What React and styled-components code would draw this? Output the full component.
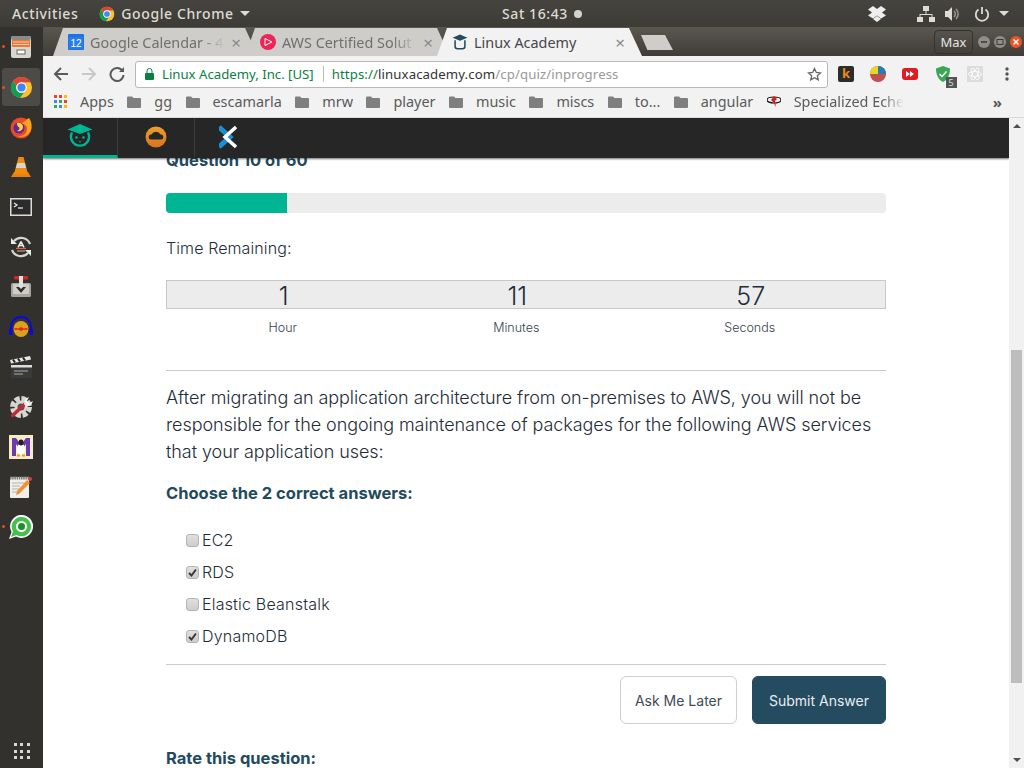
import React from "react";
import styled, { createGlobalStyle } from "styled-components";

const UI_FONT = `"Noto Sans", "DejaVu Sans", sans-serif`;
const PAGE_FONT = `Inter, "Open Sans", sans-serif`;

const Global = createGlobalStyle`
  html, body { margin: 0; padding: 0; height: 100%; overflow: hidden; background: #fff; }
  * { box-sizing: border-box; }
`;

const Chrome = ({ size = 24 }) => (
  <svg width={size} height={size} viewBox="0 0 24 24">
    <circle cx="12" cy="12" r="11" fill="#fbc02d" />
    <path d="M3.2 5.4A11 11 0 0 1 21.6 6.6H12a5.5 5.5 0 0 0-5.2 3.6z" fill="#db4437" />
    <path d="M3.2 5.4A11 11 0 0 0 10.4 22.9L15 16.6a5.5 5.5 0 0 1-8.2-6.4z" fill="#0f9d58" />
    <circle cx="12" cy="12" r="5.5" fill="#fff" />
    <circle cx="12" cy="12" r="4.3" fill="#4285f4" />
  </svg>
);

const FilesIcon = () => (
  <svg width="24" height="24" viewBox="0 0 24 24">
    <rect x="2" y="1" width="20" height="22" rx="2" fill="#d8d6d0" />
    <rect x="2" y="1" width="20" height="4" rx="2" fill="#8b8a86" />
    <rect x="3" y="5" width="18" height="7" fill="#e8793a" />
    <path d="M4 7h16M4 9.5h16" stroke="#f7c9a0" strokeWidth="1" />
    <rect x="8" y="15" width="8" height="4" fill="#fff" stroke="#66645f" />
  </svg>
);

const Firefox = () => (
  <svg width="24" height="24" viewBox="0 0 24 24">
    <circle cx="12" cy="13" r="10.5" fill="#e8482c" />
    <path d="M20 3c3 4 3.5 10 1 14-3 4.5-8 6-12 4 5 .5 9-2 9-7 0-3-2-5-5-5 0-2 3-2 4-4z" fill="#ffa31a" />
    <circle cx="10" cy="13" r="5.5" fill="#5a2a9a" />
    <path d="M8 8c3-1 6 1 6 4 0 3-3 5-6 4 2-1 3-2 2-4-1 0-2-1-2-4z" fill="#ffcf3a" />
  </svg>
);

const Vlc = () => (
  <svg width="24" height="24" viewBox="0 0 24 24">
    <path d="M2 22l3-5h14l3 5z" fill="#e8820c" />
    <path d="M9.5 2h5L19 19H5z" fill="#f08a10" />
    <path d="M8.2 8h7.6l1.3 5H6.9z" fill="#d9d5cc" />
  </svg>
);

const Terminal = () => (
  <svg width="24" height="24" viewBox="0 0 24 24">
    <rect x="1" y="3" width="22" height="18" fill="#dcdcdc" />
    <rect x="2.5" y="4.5" width="19" height="15" fill="#2b2b2b" />
    <path d="M5 8l3 2-3 2" fill="none" stroke="#eee" strokeWidth="1.2" />
    <path d="M9 13h5" stroke="#eee" strokeWidth="1.2" />
  </svg>
);

const Updater = () => (
  <svg width="24" height="24" viewBox="0 0 24 24">
    <path d="M5 6A9.5 9.5 0 0 1 21 9M19 18A9.5 9.5 0 0 1 3 15" fill="none" stroke="#d7d5d0" strokeWidth="2.2" />
    <path d="M2 3v6h6zM22 21v-6h-6z" fill="#ecebe7" />
    <path d="M12 6.5l-3 6M12 6.5l3 6M10 10.5h4" stroke="#eee" strokeWidth="1.6" fill="none" />
    <path d="M7 13.5h10" stroke="#e8622c" strokeWidth="1.2" />
    <path d="M8 16h8" stroke="#bbb" strokeWidth="1" />
  </svg>
);

const Joystick = () => (
  <svg width="24" height="24" viewBox="0 0 24 24">
    <rect x="2" y="8" width="20" height="14" rx="1.5" fill="#a6a49e" />
    <rect x="4" y="9" width="16" height="10" rx="1" fill="#cfcdc7" />
    <rect x="5" y="1" width="14" height="3.5" rx="1" fill="#cc2a20" />
    <rect x="10" y="1" width="4" height="13" fill="#e2e0da" />
    <path d="M7 12h3l2 2 2-2h3l-5 6z" fill="#2e2d2a" />
  </svg>
);

const Audacity = () => (
  <svg width="24" height="24" viewBox="0 0 24 24">
    <path d="M2 15v-3a10 10 0 0 1 20 0v3" fill="none" stroke="#0a0ae0" strokeWidth="1.8" />
    <rect x="0" y="13" width="3.5" height="7" rx="1.5" fill="#0a0ae0" />
    <rect x="20.5" y="13" width="3.5" height="7" rx="1.5" fill="#0a0ae0" />
    <ellipse cx="12" cy="14" rx="7.5" ry="8" fill="#d8a21e" />
    <path d="M4 14l3-1 2 .5 3-1.5 3 1.5 2-.5 3 1-3 1-2-.5-3 1.5-3-1.5-2 .5z" fill="#e8261c" />
  </svg>
);

const Clapper = () => (
  <svg width="24" height="24" viewBox="0 0 24 24">
    <rect x="2" y="10" width="21" height="13" rx="1" fill="#3a3a3a" />
    <path d="M1 5l20-4 1 3.5-20 4z" fill="#e6e6e6" />
    <path d="M4 4.5l2 3M9 3.5l2 3M14 2.5l2 3" stroke="#222" strokeWidth="2" />
    <path d="M2 10h21v2.5H2z" fill="#dcdcdc" />
    <path d="M5 16h14M5 19h9" stroke="#aaa" strokeWidth="1" />
  </svg>
);

const Settings = () => (
  <svg width="24" height="24" viewBox="0 0 24 24">
    <circle cx="12" cy="12" r="8.5" fill="none" stroke="#d8d6d1" strokeWidth="5" strokeDasharray="5 1.7" />
    <circle cx="12" cy="12" r="6.5" fill="#d8d6d1" />
    <circle cx="12" cy="12" r="3.5" fill="#55534f" />
    <path d="M3.5 20.5L16 9" stroke="#bf2b2e" strokeWidth="3.5" strokeLinecap="round" />
    <path d="M15 9l1-5 4-2-2 4 2 2 4-2-2 4-5 2z" fill="#f2f2f2" />
  </svg>
);

const Monodevelop = () => (
  <svg width="24" height="24" viewBox="0 0 24 24">
    <rect width="24" height="24" fill="#f6ecc8" />
    <path d="M3 21V3h4l5 7 5-7h4v18h-4V9l-5 7-5-7v12z" fill="#6a3aa8" />
    <ellipse cx="12" cy="14" rx="4" ry="5.5" fill="#fff" />
    <ellipse cx="12" cy="7.5" rx="2.5" ry="3" fill="#222" />
    <path d="M8 20.5h3M13 20.5h3" stroke="#e89a18" strokeWidth="2" />
  </svg>
);

const Notepad = () => (
  <svg width="24" height="24" viewBox="0 0 24 24">
    <rect x="1" y="2" width="19" height="21" rx="1" fill="#efefeb" />
    <path d="M1 3h19" stroke="#77756f" strokeWidth="3" strokeDasharray="1.5 .7" />
    <path d="M3 8h12M3 11h8M3 14h7M3 17h5" stroke="#b3b3ae" strokeWidth="1" />
    <path d="M7 20l1-4L18 5l3 3L10 19z" fill="#ef9235" />
    <circle cx="21" cy="4" r="2" fill="#d9403a" />
  </svg>
);

const Whatsapp = () => (
  <svg width="24" height="24" viewBox="0 0 24 24">
    <path d="M0 24l2.5-7a11.5 11.5 0 1 1 4.5 4.5z" fill="#fff" />
    <path d="M2 22l2-5.5a9.7 9.7 0 1 1 3.5 3.5z" fill="#45c04e" />
    <circle cx="12.5" cy="11.5" r="5.5" fill="#fff" />
    <circle cx="12.5" cy="11.5" r="3.5" fill="#1e8c2a" />
  </svg>
);

const Owl = () => (
  <svg width="26" height="26" viewBox="0 0 26 26">
    <path d="M13 0l12.5 5.5L13 10 .5 5.500z" fill="#00b594" />
    <path d="M5 8.500a9 9 0 1 0 16 0" fill="none" stroke="#00b594" strokeWidth="2.4" />
    <circle cx="9.500" cy="13.500" r="1.3" fill="#00b594" />
    <circle cx="16.500" cy="13.500" r="1.3" fill="#00b594" />
    <path d="M12 17h2l-1 2z" fill="#00b594" />
  </svg>
);

const CloudLogo = () => (
  <svg width="22" height="22" viewBox="0 0 22 22">
    <defs>
      <linearGradient id="cloudRing" x1="0" y1="0" x2="0" y2="1">
        <stop offset="0" stopColor="#e9a02c" />
        <stop offset="1" stopColor="#d8731f" />
      </linearGradient>
    </defs>
    <circle cx="11" cy="11" r="10.5" fill="url(#cloudRing)" />
    <path d="M6 13.5a2.500 2.500 0 0 1 .5-5 5 5 0 0 1 9 0 2.500 2.500 0 0 1 .5 5z" fill="#262626" />
  </svg>
);

const XLogo = () => (
  <svg width="18" height="24" viewBox="0 0 18 24" fill="none">
    <path d="M0 2l11 10L0 22" stroke="#1b8fd6" strokeWidth="5" />
    <path d="M17 2L6 12l11 10" stroke="#fff" strokeWidth="3.5" />
  </svg>
);

const Folder = () => (
  <svg width="14" height="12" viewBox="0 0 14 12">
    <path d="M0 1.5A1 1 0 0 1 1 .5h4L6.5 2H13a1 1 0 0 1 1 1V11a1 1 0 0 1-1 1H1a1 1 0 0 1-1-1z" fill="#7f7f7f" />
  </svg>
);

const AppsGrid = () => {
  const colors = ["#e94235", "#e94235", "#fbbc04", "#4285f4", "#34a853", "#ea4335", "#34a853", "#4285f4", "#fbbc04"];
  return (
    <svg width="13" height="13" viewBox="0 0 13 13">
      {colors.map((c, i) => (
        <rect key={i} x={(i % 3) * 5} y={Math.floor(i / 3) * 5} width="3" height="3" fill={c} />
      ))}
    </svg>
  );
};

const Page = styled.div`
  width: 1024px;
  height: 768px;
  overflow: hidden;
  display: flex;
  flex-direction: column;
  font-family: ${UI_FONT};
`;

const TopBar = styled.div`
  height: 27px;
  flex: none;
  display: grid;
  grid-template-columns: 490px auto 1fr;
  align-items: center;
  padding: 0 15px 0 12px;
  background: linear-gradient(#46443f, #3c3b36);
  color: #dfdbd2;
  font-size: 14px;
  font-weight: 500;
  letter-spacing: 0.6px;
`;

const TopLeft = styled.div`
  display: flex;
  align-items: center;
`;

const AppMenu = styled.div`
  display: flex;
  align-items: center;
  gap: 6px;
  margin-left: 21px;
`;

const Caret = styled.span`
  width: 0;
  height: 0;
  border-left: 5px solid transparent;
  border-right: 5px solid transparent;
  border-top: 5px solid #dfdbd2;
`;

const Clock = styled.div`
  display: flex;
  align-items: center;
  gap: 6px;
`;

const ClockDot = styled.span`
  width: 8px;
  height: 8px;
  border-radius: 50%;
  background: #d5d3cd;
`;

const Tray = styled.div`
  display: flex;
  align-items: center;
  justify-content: flex-end;
`;

const TrayIcon = styled.span`
  display: flex;
  margin-right: ${({ $mr }) => $mr}px;
`;

const Desktop = styled.div`
  flex: 1;
  min-height: 0;
  display: flex;
`;

const Dock = styled.div`
  width: 43px;
  flex: none;
  display: flex;
  flex-direction: column;
  background: #33312d;
  padding-bottom: 9px;
`;

const DockSlot = styled.div`
  position: relative;
  height: ${({ $active }) => ($active ? "38px" : "40px")};
  flex: none;
  display: flex;
  align-items: center;
  justify-content: center;
  background: ${({ $active }) => ($active ? "#4d4b47" : "transparent")};
  margin: ${({ $active }) => ($active ? "1px 3px 1px 2px" : "0 3px 0 2px")};
  border-radius: 3px;
`;

const RunDot = styled.span`
  position: absolute;
  left: 0;
  top: 18px;
  width: 3px;
  height: 3px;
  border-radius: 50%;
  background: #e2531d;
`;

const DockGrid = styled.div`
  margin: auto auto 0;
  display: grid;
  grid-template-columns: repeat(3, 3px);
  gap: 3.5px;
  & > span {
    width: 3px;
    height: 3px;
    background: #d8d8d8;
  }
`;

const Browser = styled.div`
  flex: 1;
  min-width: 0;
  display: flex;
  flex-direction: column;
`;

const TabStrip = styled.div`
  height: 29px;
  flex: none;
  display: flex;
  align-items: flex-end;
  padding-left: 10px;
  background: linear-gradient(#5a574f, #3f3d38);
`;

const Tab = styled.div`
  position: relative;
  z-index: ${({ $active, $order }) => ($active ? 5 : $order)};
  width: 205px;
  height: 28px;
  flex: none;
  margin-right: -13px;
  display: flex;
  align-items: center;
  gap: 6px;
  padding: 0 17px 0 15px;
  color: ${({ $active }) => ($active ? "#45474a" : "#6f6f6f")};
  background: ${({ $active }) => ($active ? "#f2f2f2" : "#cfcdca")};
  clip-path: polygon(0 100%, 10px 0, calc(100% - 13px) 0, 100% 100%);
  font-size: 14.4px;
`;

const TabTitle = styled.span`
  flex: 1;
  white-space: nowrap;
  overflow: hidden;
  mask-image: ${({ $active }) => ($active ? "none" : "linear-gradient(90deg, #000 82%, transparent)")};
`;

const TabClose = styled.span`
  font-size: 17px;
  color: #8a8a8a;
  line-height: 1;
`;

const NewTab = styled.div`
  width: 32px;
  height: 15px;
  margin: 0 0 6px 12px;
  background: #cfcdca;
  clip-path: polygon(0 0, 75% 0, 100% 100%, 20% 100%);
`;

const WindowControls = styled.div`
  margin-left: auto;
  align-self: center;
  display: flex;
  align-items: center;
  gap: 4px;
  padding-right: 2px;
`;

const MaxBadge = styled.div`
  width: 39px;
  height: 24px;
  margin-right: 1px;
  display: flex;
  align-items: center;
  justify-content: center;
  border: 1px solid #33322e;
  border-radius: 4px;
  color: #e6e6e6;
  font-size: 13px;
`;

const WinButton = styled.span`
  width: 12px;
  height: 12px;
  display: flex;
  border-radius: 50%;
  background: ${({ $close }) => ($close ? "#e9552b" : "#8f8d87")};
`;

const Toolbar = styled.div`
  height: 34px;
  flex: none;
  display: flex;
  align-items: center;
  background: #f2f2f2;
  padding: 2px 0 0 4px;
`;

const NavIcon = styled.div`
  width: 28px;
  display: flex;
  justify-content: center;
`;

const Omnibox = styled.div`
  width: 693px;
  height: 27px;
  margin-left: 4px;
  display: flex;
  align-items: center;
  padding: 0 5px 0 9px;
  background: #fff;
  border: 1px solid #b8b8b8;
  border-radius: 3px;
  font-size: 13.2px;
  white-space: nowrap;
`;

const SecureName = styled.span`
  color: #0b8043;
  margin-left: 8px;
`;

const UrlDivider = styled.span`
  width: 1px;
  height: 16px;
  background: #bbb;
  margin: 0 8px 0 9px;
`;

const UrlPart = styled.span`
  color: ${({ $color }) => $color};
  letter-spacing: 0.11px;
`;

const Star = styled.span`
  margin-left: auto;
  display: flex;
`;

const Extensions = styled.div`
  flex: 1;
  display: flex;
  align-items: center;
  justify-content: space-between;
  padding: 0 9px 0 10px;
`;

const Extension = styled.div`
  position: relative;
  width: 16px;
  height: 16px;
  display: flex;
  align-items: center;
  justify-content: center;
`;

const ExtKey = styled.div`
  width: 16px;
  height: 16px;
  border-radius: 2px;
  background: #2c2c2c;
  color: #f08a18;
  font-size: 13px;
  font-weight: 700;
  line-height: 15px;
  text-align: center;
`;

const ExtBadge = styled.span`
  position: absolute;
  right: -6px;
  bottom: -6px;
  width: 11px;
  height: 11px;
  background: #555;
  color: #ddd;
  font-size: 9px;
  line-height: 11px;
  text-align: center;
`;

const BookmarksBar = styled.div`
  height: 28px;
  flex: none;
  display: flex;
  align-items: center;
  gap: 13.5px;
  padding: 0 22px 4px 11px;
  background: #f2f2f2;
  border-bottom: 1px solid #d9d9d9;
  color: #5a5a5a;
  font-size: 14.4px;
  white-space: nowrap;
`;

const Bookmark = styled.div`
  display: flex;
  align-items: center;
  gap: 13px;
`;

const FadedLabel = styled.span`
  width: 110px;
  overflow: hidden;
  mask-image: linear-gradient(90deg, #000 80%, transparent);
`;

const More = styled.span`
  margin-left: auto;
  color: #555;
  font-size: 15px;
  font-weight: 700;
`;

const Viewport = styled.div`
  flex: 1;
  min-height: 0;
  display: flex;
`;

const PageColumn = styled.div`
  flex: 1;
  min-width: 0;
  display: flex;
  flex-direction: column;
  overflow: hidden;
  font-family: ${PAGE_FONT};
  background: #fff;
`;

const AppNav = styled.div`
  position: relative;
  z-index: 2;
  height: 40px;
  flex: none;
  display: flex;
  background: #262626;
  box-shadow: 0 1px 2px rgba(0, 0, 0, 0.55);
`;

const AppNavItem = styled.div`
  width: ${({ $width }) => $width}px;
  display: flex;
  align-items: center;
  justify-content: center;
  border-right: ${({ $last }) => ($last ? "none" : "1px solid #3d3d3d")};
  border-bottom: 3px solid ${({ $active }) => ($active ? "#00b594" : "transparent")};
`;

const Main = styled.div`
  width: 720px;
  margin: -9px 0 0 123px;
  flex: none;
`;

const Heading = styled.div`
  font-size: 16.5px;
  line-height: 22px;
  font-weight: 700;
  color: #224a5e;
`;

const ProgressTrack = styled.div`
  height: 20px;
  margin-top: 22px;
  border-radius: 4px;
  background: #ececec;
  overflow: hidden;
`;

const ProgressFill = styled.div`
  height: 100%;
  background: #00b594;
`;

const TimeLabel = styled.div`
  margin-top: 24px;
  font-size: 16px;
  line-height: 22px;
  font-weight: 300;
  letter-spacing: 0.1px;
  color: #1e2d38;
`;

const TimerGrid = styled.div`
  display: grid;
  grid-template-columns: repeat(3, 233.5px);
`;

const TimerBox = styled(TimerGrid)`
  height: 29px;
  margin-top: 21px;
  background: #ececec;
  border: 1px solid #c8c8c8;
  font-size: 25px;
  font-weight: 300;
  line-height: 31px;
  color: #1e2d38;
  text-align: center;
`;

const TimerLabels = styled(TimerGrid)`
  margin-top: 11px;
  font-size: 12.5px;
  line-height: 16px;
  font-weight: 300;
  color: #35434e;
  text-align: center;
`;

const Rule = styled.div`
  height: 1px;
  background: #c8ccd0;
  margin-top: ${({ $top }) => $top}px;
`;

const Question = styled.div`
  margin-top: 13px;
  font-size: 18px;
  line-height: 27px;
  font-weight: 300;
  letter-spacing: -0.07px;
  color: #1e2d38;
`;

const ChooseLabel = styled.div`
  margin-top: 17px;
  font-size: 16.5px;
  line-height: 22px;
  font-weight: 700;
  color: #224a5e;
`;

const Answers = styled.div`
  margin-top: 20px;
  padding-left: 20px;
  display: flex;
  flex-direction: column;
`;

const Answer = styled.div`
  height: 32px;
  display: flex;
  align-items: center;
  gap: 3px;
  font-size: 16px;
  font-weight: 300;
  letter-spacing: 0.2px;
  color: #1e2d38;
`;

const CheckBox = styled.span`
  width: 13px;
  height: 13px;
  display: flex;
  align-items: center;
  justify-content: center;
  border: 1px solid #b4b4b4;
  border-radius: 3px;
  background: linear-gradient(#e0e0e0, #cdcdcd);
`;

const Actions = styled.div`
  margin-top: 11px;
  display: flex;
  justify-content: flex-end;
  gap: 15px;
`;

const ActionButton = styled.div`
  height: 48px;
  width: ${({ $primary }) => ($primary ? "134px" : "117px")};
  display: flex;
  align-items: center;
  justify-content: center;
  border-radius: 6px;
  border: 1px solid ${({ $primary }) => ($primary ? "#244b5f" : "#cfcfcf")};
  background: ${({ $primary }) => ($primary ? "#244b5f" : "#fff")};
  color: ${({ $primary }) => ($primary ? "#e6eef2" : "#3e4c57")};
  font-size: 14px;
`;

const RateHeading = styled(Heading)`
  margin-top: 24px;
  line-height: 20px;
`;

const Scrollbar = styled.div`
  width: 15px;
  flex: none;
  display: flex;
  flex-direction: column;
  align-items: center;
  background: #f1f1f1;
`;

const ScrollArrow = styled.span`
  width: 0;
  height: 0;
  margin: ${({ $down }) => ($down ? "auto 0 6px" : "6px 0 0")};
  border-left: 4px solid transparent;
  border-right: 4px solid transparent;
  border-top: ${({ $down }) => ($down ? "4px solid #505050" : "none")};
  border-bottom: ${({ $down }) => ($down ? "none" : "4px solid #505050")};
`;

const ScrollThumb = styled.div`
  width: 11px;
  height: 333px;
  margin-top: 222px;
  background: #bdbdbd;
`;

const dockIcons = [
  { icon: <FilesIcon />, running: true },
  { icon: <Chrome size={23} />, running: true, active: true },
  { icon: <Firefox /> },
  { icon: <Vlc /> },
  { icon: <Terminal /> },
  { icon: <Updater /> },
  { icon: <Joystick /> },
  { icon: <Audacity /> },
  { icon: <Clapper /> },
  { icon: <Settings /> },
  { icon: <Monodevelop /> },
  { icon: <Notepad /> },
  { icon: <Whatsapp />, running: true }
];

const bookmarks = ["gg", "escamarla", "mrw", "player", "music", "miscs", "to..."];

const answers = [
  { label: "EC2", checked: false },
  { label: "RDS", checked: true },
  { label: "Elastic Beanstalk", checked: false },
  { label: "DynamoDB", checked: true }
];

export default function App() {
  return (
    <Page>
      <Global />
      <TopBar>
        <TopLeft>
          Activities
          <AppMenu>
            <Chrome size={16} />
            Google Chrome
            <Caret />
          </AppMenu>
        </TopLeft>
        <Clock>
          Sat 16:43
          <ClockDot />
        </Clock>
        <Tray>
          <TrayIcon $mr={31}>
            <svg width="18" height="16" viewBox="0 0 18 16">
              <path d="M5 0l4 3 4-3 5 3.5-4 3 4 3-5 3-4-3-4 3-5-3 4-3-4-3zM5 13l4-3 4 3-4 3z" fill="#eee" />
            </svg>
          </TrayIcon>
          <TrayIcon $mr={10}>
            <svg width="18" height="16" viewBox="0 0 18 16" fill="#dfdbd2">
              <rect x="6" y="0" width="6" height="5" />
              <rect x="0" y="11" width="6" height="5" />
              <rect x="12" y="11" width="6" height="5" />
              <path d="M8.5 5h1v3h6v3h-1V9h-11v2h-1V8h6z" />
            </svg>
          </TrayIcon>
          <TrayIcon $mr={14}>
            <svg width="15" height="14" viewBox="0 0 15 14" fill="#dfdbd2">
              <path d="M0 4h3l4-4v14l-4-4H0z" />
              <path d="M9 4a4 4 0 0 1 0 6M11 2a7 7 0 0 1 0 10" stroke="#9a9891" strokeWidth="1.5" fill="none" />
            </svg>
          </TrayIcon>
          <TrayIcon $mr={9}>
            <svg width="16" height="16" viewBox="0 0 16 16" fill="none" stroke="#dfdbd2" strokeWidth="1.8">
              <path d="M8 1v7" />
              <path d="M4.5 3.5a6.2 6.2 0 1 0 7 0" />
            </svg>
          </TrayIcon>
          <Caret />
        </Tray>
      </TopBar>
      <Desktop>
        <Dock>
          {dockIcons.map((item, i) => (
            <DockSlot key={i} $active={item.active}>
              {item.running && <RunDot />}
              {item.icon}
            </DockSlot>
          ))}
          <DockGrid>
            {Array.from({ length: 9 }, (_, i) => (
              <span key={i} />
            ))}
          </DockGrid>
        </Dock>
        <Browser>
          <TabStrip>
            <Tab $order={3}>
              <svg width="16" height="16" viewBox="0 0 16 16">
                <rect width="16" height="16" rx="1" fill="#1a73e8" />
                <rect x="1" y="3" width="14" height="12" fill="#2a7de8" />
                <text x="8" y="13" fontSize="10" fill="#fff" textAnchor="middle" fontFamily="Liberation Sans">12</text>
              </svg>
              <TabTitle>Google Calendar - 4</TabTitle>
              <TabClose>×</TabClose>
            </Tab>
            <Tab $order={2}>
              <svg width="16" height="16" viewBox="0 0 16 16">
                <circle cx="8" cy="8" r="8" fill="#ee2457" />
                <path d="M5 4.5l7 3.5-7 3.5z" fill="none" stroke="#fff" />
              </svg>
              <TabTitle>AWS Certified Solut</TabTitle>
              <TabClose>×</TabClose>
            </Tab>
            <Tab $active>
              <svg width="16" height="16" viewBox="0 0 26 26">
                <path d="M13 1l12 5-12 5L1 6z" fill="#234a5e" />
                <path d="M5 10v10a4 4 0 0 0 4 4h8a4 4 0 0 0 4-4V10" fill="none" stroke="#234a5e" strokeWidth="2.5" />
              </svg>
              <TabTitle $active>Linux Academy</TabTitle>
              <TabClose>×</TabClose>
            </Tab>
            <NewTab />
            <WindowControls>
              <MaxBadge>Max</MaxBadge>
              <WinButton>
                <svg width="12" height="12" viewBox="0 0 12 12">
                  <path d="M3 6h6" stroke="#3c3a36" strokeWidth="1.5" />
                </svg>
              </WinButton>
              <WinButton>
                <svg width="12" height="12" viewBox="0 0 12 12">
                  <rect x="3" y="3.5" width="6" height="5" fill="none" stroke="#3c3a36" />
                </svg>
              </WinButton>
              <WinButton $close>
                <svg width="12" height="12" viewBox="0 0 12 12">
                  <path d="M3.5 3.5l5 5M8.5 3.5l-5 5" stroke="#fff" strokeWidth="1.3" />
                </svg>
              </WinButton>
            </WindowControls>
          </TabStrip>
          <Toolbar>
            <NavIcon>
              <svg width="16" height="16" viewBox="0 0 16 16" fill="none" stroke="#5a5a5a" strokeWidth="2">
                <path d="M15 8H2M8 2L2 8l6 6" />
              </svg>
            </NavIcon>
            <NavIcon>
              <svg width="16" height="16" viewBox="0 0 16 16" fill="none" stroke="#c8c8c8" strokeWidth="2">
                <path d="M1 8h13M8 2l6 6-6 6" />
              </svg>
            </NavIcon>
            <NavIcon>
              <svg width="16" height="16" viewBox="0 0 16 16" fill="none" stroke="#5a5a5a" strokeWidth="2">
                <path d="M13.5 5A6.5 6.5 0 1 0 14.5 9" />
                <path d="M15 1v5h-5" fill="#5a5a5a" stroke="none" />
              </svg>
            </NavIcon>
            <Omnibox>
              <svg width="9" height="12" viewBox="0 0 9 12" fill="#0b8043">
                <path d="M1 5h7a1 1 0 0 1 1 1v5a1 1 0 0 1-1 1H1a1 1 0 0 1-1-1V6a1 1 0 0 1 1-1z" />
                <path d="M2 5V3a2.5 2.5 0 0 1 5 0v2" fill="none" stroke="#0b8043" />
              </svg>
              <SecureName>Linux Academy, Inc. [US]</SecureName>
              <UrlDivider />
              <UrlPart $color="#0b8043">https://</UrlPart>
              <UrlPart $color="#333">linuxacademy.com</UrlPart>
              <UrlPart $color="#999">/cp/quiz/inprogress</UrlPart>
              <Star>
                <svg width="15" height="15" viewBox="0 0 15 15" fill="none" stroke="#666" strokeWidth="1.3">
                  <path d="M7.5 1.5l1.8 4 4.2.4-3.2 2.8 1 4.2-3.8-2.2-3.8 2.2 1-4.2L1.5 5.9l4.2-.4z" />
                </svg>
              </Star>
            </Omnibox>
            <Extensions>
              <Extension>
                <ExtKey>k</ExtKey>
              </Extension>
              <Extension>
                <svg width="16" height="16" viewBox="0 0 16 16">
                  <circle cx="8" cy="8" r="8" fill="#c0504d" />
                  <path d="M8 8V0a8 8 0 0 1 8 8z" fill="#2a7ab8" />
                  <path d="M8 8V0a8 8 0 0 0-8 8z" fill="#e8d820" />
                </svg>
              </Extension>
              <Extension>
                <svg width="16" height="12" viewBox="0 0 16 12">
                  <rect width="16" height="12" rx="3" fill="#e01b24" />
                  <path d="M4 3l4 3-4 3zM8 3l4 3-4 3z" fill="#fff" />
                </svg>
              </Extension>
              <Extension>
                <svg width="16" height="16" viewBox="0 0 16 16">
                  <path d="M8 0l7 2.5c0 6-2 11-7 13.5C3 13.5 1 8.5 1 2.5z" fill="#3aa757" />
                  <path d="M4.5 8l2.5 2.5 4.5-5" fill="none" stroke="#fff" strokeWidth="1.5" />
                </svg>
                <ExtBadge>5</ExtBadge>
              </Extension>
              <Extension>
                <svg width="16" height="16" viewBox="0 0 16 16" fill="none" stroke="#fff" strokeWidth="0.8">
                  <rect width="16" height="16" fill="#dcdcdc" stroke="none" />
                  <ellipse cx="8" cy="8" rx="6.5" ry="2.5" />
                  <ellipse cx="8" cy="8" rx="6.5" ry="2.5" transform="rotate(60 8 8)" />
                  <ellipse cx="8" cy="8" rx="6.5" ry="2.5" transform="rotate(120 8 8)" />
                </svg>
              </Extension>
              <Extension>
                <svg width="4" height="14" viewBox="0 0 4 14" fill="#555">
                  <circle cx="2" cy="2" r="1.7" />
                  <circle cx="2" cy="7" r="1.7" />
                  <circle cx="2" cy="12" r="1.7" />
                </svg>
              </Extension>
            </Extensions>
          </Toolbar>
          <BookmarksBar>
            <Bookmark>
              <AppsGrid />
              Apps
            </Bookmark>
            {bookmarks.map(name => (
              <Bookmark key={name}>
                <Folder />
                {name}
              </Bookmark>
            ))}
            <Bookmark>
              <Folder />
              angular
            </Bookmark>
            <Bookmark>
              <svg width="14" height="14" viewBox="0 0 14 14">
                <ellipse cx="7" cy="5" rx="7" ry="3" fill="none" stroke="#111" strokeWidth="1.2" />
                <path d="M7 1l3 3-2 2 1 6-3-5-2-2z" fill="#d81e1e" />
              </svg>
              <FadedLabel>Specialized Eche</FadedLabel>
            </Bookmark>
            <More>»</More>
          </BookmarksBar>
          <Viewport>
            <PageColumn>
              <AppNav>
                <AppNavItem $width={75} $active>
                  <Owl />
                </AppNavItem>
                <AppNavItem $width={77}>
                  <CloudLogo />
                </AppNavItem>
                <AppNavItem $width={65} $last>
                  <XLogo />
                </AppNavItem>
              </AppNav>
              <Main>
                <Heading>Question 10 of 60</Heading>
                <ProgressTrack>
                  <ProgressFill style={{ width: `${(10 / 60) * 100 + 0.2}%` }} />
                </ProgressTrack>
                <TimeLabel>Time Remaining:</TimeLabel>
                <TimerBox>
                  <span>1</span>
                  <span>11</span>
                  <span>57</span>
                </TimerBox>
                <TimerLabels>
                  <span>Hour</span>
                  <span>Minutes</span>
                  <span>Seconds</span>
                </TimerLabels>
                <Rule $top={34} />
                <Question>
                  After migrating an application architecture from on-premises to AWS, you will not be
                  responsible for the ongoing maintenance of packages for the following AWS services
                  that your application uses:
                </Question>
                <ChooseLabel>Choose the 2 correct answers:</ChooseLabel>
                <Answers>
                  {answers.map(answer => (
                    <Answer key={answer.label}>
                      <CheckBox>
                        {answer.checked && (
                          <svg width="9" height="9" viewBox="0 0 9 9" fill="none" stroke="#3a3a3a" strokeWidth="2">
                            <path d="M1 5l2.5 2.5L8 1.5" />
                          </svg>
                        )}
                      </CheckBox>
                      {answer.label}
                    </Answer>
                  ))}
                </Answers>
                <Rule $top={12} />
                <Actions>
                  <ActionButton>Ask Me Later</ActionButton>
                  <ActionButton $primary>Submit Answer</ActionButton>
                </Actions>
                <RateHeading>Rate this question:</RateHeading>
              </Main>
            </PageColumn>
            <Scrollbar>
              <ScrollArrow />
              <ScrollThumb />
              <ScrollArrow $down />
            </Scrollbar>
          </Viewport>
        </Browser>
      </Desktop>
    </Page>
  );
}
